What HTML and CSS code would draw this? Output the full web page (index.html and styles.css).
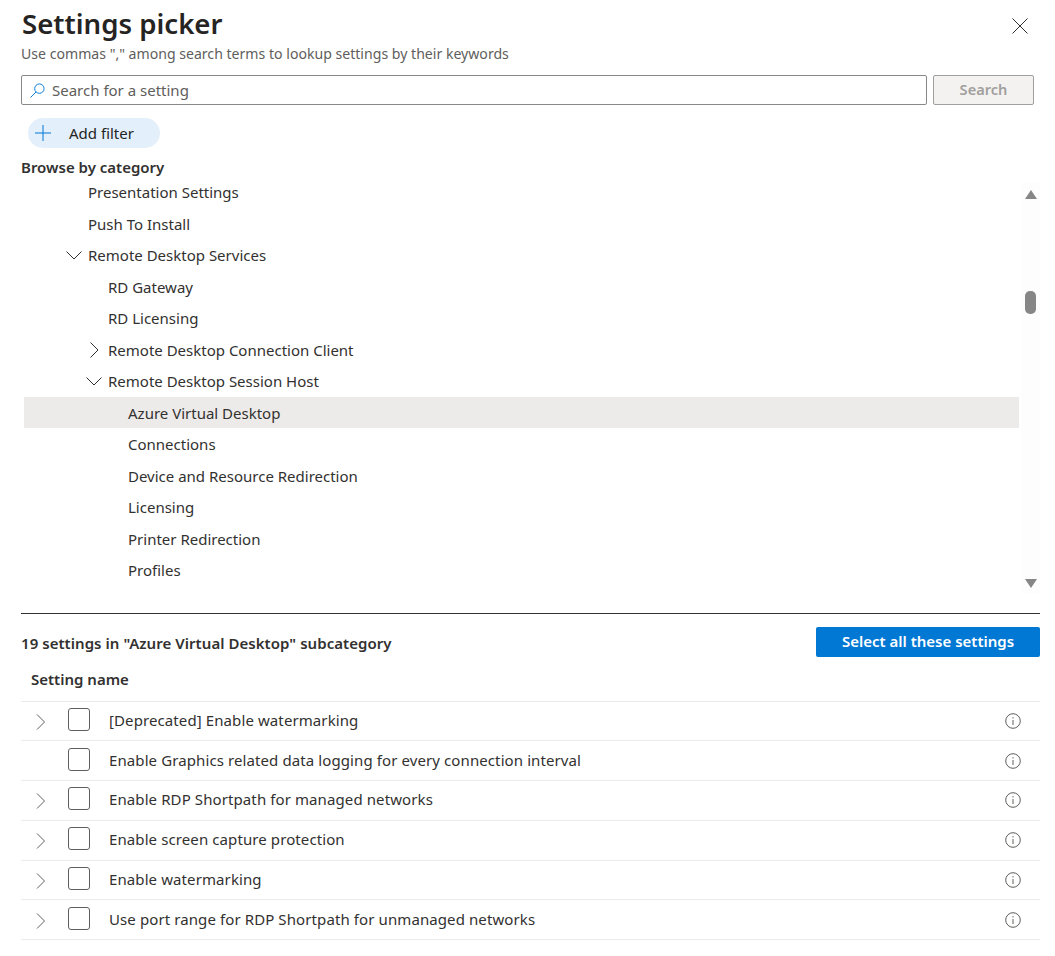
FILE: index.html
```html
<!DOCTYPE html>
<html lang="en">

<head>
    <meta charset="UTF-8">
    <meta name="viewport" content="width=device-width, initial-scale=1.0">
    <title>Settings picker</title>
    <link rel="stylesheet" href="styles.css">
</head>

<body>
    <div class="panel">
        <div class="title-row">
            <h1>Settings picker</h1>
            <svg class="close-icon" viewBox="0 0 16 16"><path d="M.5.5l15 15M15.5.5l-15 15"/></svg>
        </div>
        <p class="hint">Use commas "," among search terms to lookup settings by their keywords</p>

        <div class="search-row">
            <div class="search-box">
                <svg class="search-icon" viewBox="0 0 16 16"><circle cx="10" cy="6" r="5"/><path d="M6.4 9.6L.6 15.4"/></svg>
                <span>Search for a setting</span>
            </div>
            <button class="search-btn">Search</button>
        </div>

        <div class="filter-pill">
            <svg class="plus-icon" viewBox="0 0 16 16"><path d="M8 0v16M0 8h16"/></svg>
            <span>Add filter</span>
        </div>

        <h2 class="browse">Browse by category</h2>

        <div class="tree-wrap">
            <ul class="tree">
                <li class="lvl-0">Presentation Settings</li>
                <li class="lvl-0">Push To Install</li>
                <li class="lvl-0"><svg class="tree-arrow" viewBox="0 0 16 16"><path d="M.5 4.5L8 12l7.500-7.500"/></svg>Remote Desktop Services</li>
                <li class="lvl-1">RD Gateway</li>
                <li class="lvl-1">RD Licensing</li>
                <li class="lvl-1"><svg class="tree-arrow" viewBox="0 0 16 16"><path d="M4.500.5L12 8l-7.500 7.500"/></svg>Remote Desktop Connection Client</li>
                <li class="lvl-1"><svg class="tree-arrow" viewBox="0 0 16 16"><path d="M.5 4.500L8 12l7.500-7.500"/></svg>Remote Desktop Session Host</li>
                <li class="lvl-2 selected">Azure Virtual Desktop</li>
                <li class="lvl-2">Connections</li>
                <li class="lvl-2">Device and Resource Redirection</li>
                <li class="lvl-2">Licensing</li>
                <li class="lvl-2">Printer Redirection</li>
                <li class="lvl-2">Profiles</li>
            </ul>
            <div class="scrollbar">
                <span class="arrow-up"></span>
                <span class="thumb"></span>
                <span class="arrow-down"></span>
            </div>
        </div>

        <div class="summary-row">
            <span class="summary">19 settings in "Azure Virtual Desktop" subcategory</span>
            <button class="select-all">Select all these settings</button>
        </div>

        <div class="col-head">Setting name</div>

        <div class="setting">
            <svg class="row-arrow" viewBox="0 0 16 16"><path d="M4 .5L11.500 8 4 15.500"/></svg>
            <span class="check"></span>
            <span class="setting-name">[Deprecated] Enable watermarking</span>
            <svg class="info-icon" viewBox="0 0 16 16"><circle cx="8" cy="8" r="7.300"/><path d="M8 7v5M8 4.200v1.300"/></svg>
        </div>
        <div class="setting">
            <span class="row-arrow"></span>
            <span class="check"></span>
            <span class="setting-name">Enable Graphics related data logging for every connection interval</span>
            <svg class="info-icon" viewBox="0 0 16 16"><circle cx="8" cy="8" r="7.300"/><path d="M8 7v5M8 4.200v1.300"/></svg>
        </div>
        <div class="setting">
            <svg class="row-arrow" viewBox="0 0 16 16"><path d="M4 .5L11.500 8 4 15.500"/></svg>
            <span class="check"></span>
            <span class="setting-name">Enable RDP Shortpath for managed networks</span>
            <svg class="info-icon" viewBox="0 0 16 16"><circle cx="8" cy="8" r="7.300"/><path d="M8 7v5M8 4.200v1.300"/></svg>
        </div>
        <div class="setting">
            <svg class="row-arrow" viewBox="0 0 16 16"><path d="M4 .5L11.500 8 4 15.500"/></svg>
            <span class="check"></span>
            <span class="setting-name">Enable screen capture protection</span>
            <svg class="info-icon" viewBox="0 0 16 16"><circle cx="8" cy="8" r="7.300"/><path d="M8 7v5M8 4.200v1.300"/></svg>
        </div>
        <div class="setting">
            <svg class="row-arrow" viewBox="0 0 16 16"><path d="M4 .5L11.500 8 4 15.500"/></svg>
            <span class="check"></span>
            <span class="setting-name">Enable watermarking</span>
            <svg class="info-icon" viewBox="0 0 16 16"><circle cx="8" cy="8" r="7.300"/><path d="M8 7v5M8 4.200v1.300"/></svg>
        </div>
        <div class="setting">
            <svg class="row-arrow" viewBox="0 0 16 16"><path d="M4 .5L11.500 8 4 15.500"/></svg>
            <span class="check"></span>
            <span class="setting-name">Use port range for RDP Shortpath for unmanaged networks</span>
            <svg class="info-icon" viewBox="0 0 16 16"><circle cx="8" cy="8" r="7.300"/><path d="M8 7v5M8 4.200v1.300"/></svg>
        </div>
    </div>
</body>

</html>
```

FILE: styles.css
```css
* {
    box-sizing: border-box;
}

body {
    margin: 0;
    background-color: #fff;
    color: #323130;
    font-family: "Noto Sans", "Open Sans", sans-serif;
    font-size: 15px;
}

svg {
    fill: none;
    stroke-width: 1;
    flex-shrink: 0;
}

.panel {
    width: 1019px;
    margin-left: 21px;
    padding-top: 4px;
}

.title-row {
    display: flex;
    justify-content: space-between;
    align-items: center;
    height: 38px;
}

h1 {
    margin: 0;
    padding-left: 1px;
    font-size: 27.6px;
    font-weight: 600;
    color: #252423;
}

.close-icon {
    width: 16px;
    height: 16px;
    stroke: #323130;
    margin-right: 12px;
    margin-top: 6px;
}

.hint {
    margin: 0;
    height: 23px;
    line-height: 23px;
    font-size: 14.1px;
    color: #605e5c;
}

.search-row {
    display: flex;
    margin-top: 10px;
    width: 1013px;
    justify-content: space-between;
}

.search-box {
    display: flex;
    align-items: center;
    width: 906px;
    height: 30px;
    border: 1px solid #8a8886;
    border-radius: 2px;
    padding-left: 8px;
    color: #605e5c;
}

.search-icon {
    width: 15px;
    height: 15px;
    stroke: #0078d4;
    margin-right: 7px;
}

.search-btn {
    width: 101px;
    height: 30px;
    border: 1px solid #a19f9d;
    border-radius: 2px;
    background-color: #f3f2f1;
    color: #a19f9d;
    font-family: inherit;
    font-size: 14.6px;
    font-weight: 600;
    padding: 0 0 3px;
}

.filter-pill {
    display: flex;
    align-items: center;
    width: 132px;
    height: 30px;
    margin-top: 13px;
    margin-left: 7px;
    padding-left: 7px;
    border-radius: 15px;
    background-color: #e3effa;
    color: #252423;
}

.plus-icon {
    width: 16px;
    height: 16px;
    stroke: #0078d4;
    margin-right: 18px;
}

.browse {
    margin: 9px 0 0;
    height: 19px;
    line-height: 20px;
    font-size: 15px;
    font-weight: 600;
}

.tree-wrap {
    display: flex;
    justify-content: space-between;
    height: 438px;
    border-bottom: 1px solid #323130;
    padding-bottom: 20px;
    padding-left: 3px;
}

.tree {
    list-style: none;
    margin: 0;
    padding: .4px 0 0;
    width: 995px;
}

.tree li {
    display: flex;
    align-items: center;
    height: 31.5px;
}

.lvl-0 {
    padding-left: 64px;
}

.lvl-1 {
    padding-left: 84px;
}

.lvl-2 {
    padding-left: 104px;
}

.tree .selected {
    background-color: #edebe9;
}

.tree-arrow {
    width: 16px;
    height: 16px;
    stroke: #323130;
    margin-left: -22px;
    margin-right: 6px;
}

.scrollbar {
    display: flex;
    flex-direction: column;
    align-items: center;
    width: 19px;
    margin-top: 7px;
    background-color: #fdfdfd;
    padding-top: 7px;
}

.arrow-up {
    width: 0;
    height: 0;
    border-left: 6px solid transparent;
    border-right: 6px solid transparent;
    border-bottom: 9px solid #868686;
}

.thumb {
    width: 11px;
    height: 23px;
    margin-top: 92px;
    border-radius: 5px;
    background-color: #868686;
}

.arrow-down {
    width: 0;
    height: 0;
    margin-top: auto;
    margin-bottom: 5px;
    border-left: 6px solid transparent;
    border-right: 6px solid transparent;
    border-top: 9px solid #868686;
}

.summary-row {
    display: flex;
    justify-content: space-between;
    align-items: center;
    height: 30px;
    margin-top: 13px;
}

.summary {
    font-weight: 600;
    letter-spacing: .05px;
    padding-top: 2px;
}

.select-all {
    width: 224px;
    height: 30px;
    border: 0;
    border-radius: 2px;
    background-color: #0078d4;
    color: #fff;
    font-family: inherit;
    font-size: 15px;
    font-weight: 600;
    padding: 0 0 2px;
}

.col-head {
    height: 44.6px;
    line-height: 45px;
    padding-left: 10px;
    font-weight: 600;
    border-bottom: 1px solid #edebe9;
}

.setting {
    display: flex;
    align-items: center;
    height: 39.75px;
    border-bottom: 1px solid #edebe9;
}

.row-arrow {
    width: 16px;
    height: 16px;
    stroke: #605e5c;
    margin: 2px 19px 0 12px;
}

.check {
    width: 22px;
    height: 23px;
    margin-right: 19px;
    margin-top: -3px;
    border: 1px solid #605e5c;
    border-radius: 3px;
}

.setting-name {
    flex: 1;
    margin-top: -2px;
    letter-spacing: .1px;
    color: #323130;
}

.info-icon {
    width: 16px;
    height: 16px;
    stroke: #605e5c;
    margin-right: 19px;
}
```
